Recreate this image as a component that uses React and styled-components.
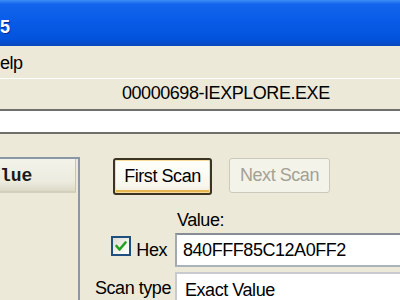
import styled, { createGlobalStyle } from "styled-components";

const GlobalStyle = createGlobalStyle`
  html, body {
    margin: 0;
    padding: 0;
    background: #ece9d8;
    overflow: hidden;
  }
  body {
    font-family: "Liberation Sans", Arial, sans-serif;
    font-size: 18px;
    letter-spacing: -0.45px;
    color: #000;
  }
`;

const App = () => {
  return (
    <Window>
      <GlobalStyle />
      <TitleBar>
        <TitleText>5</TitleText>
      </TitleBar>

      <MenuBar>
        <MenuItem>elp</MenuItem>
      </MenuBar>

      <ProcessBar>00000698-IEXPLORE.EXE</ProcessBar>
      <ProgressBar />

      <Main>
        <ListPanel>
          <ListHeader>lue</ListHeader>
        </ListPanel>

        <ScanPanel>
          <ButtonRow>
            <ScanButton $primary>First Scan</ScanButton>
            <ScanButton disabled>Next Scan</ScanButton>
          </ButtonRow>

          <Form>
            <span />
            <FieldLabel>Value:</FieldLabel>

            <HexLabel>
              <CheckBox>
                <svg width="14" height="14" viewBox="0 0 14 14">
                  <path
                    d="M2.5 7 L5.5 10.5 L11.5 3.5"
                    fill="none"
                    stroke="#21a121"
                    strokeWidth="2.6"
                    strokeLinecap="round"
                    strokeLinejoin="round"
                  />
                </svg>
              </CheckBox>
              Hex
            </HexLabel>
            <TextBox>840FFF85C12A0FF2</TextBox>

            <RowLabel>Scan type</RowLabel>
            <TextBox $light>Exact Value</TextBox>
          </Form>
        </ScanPanel>
      </Main>
    </Window>
  );
};

export default App;

const Window = styled.div`
  width: 400px;
  height: 300px;
  overflow: hidden;
  background: #ece9d8;
`;

const TitleBar = styled.div`
  height: 46px;
  box-sizing: border-box;
  padding-top: 17px;
  background: linear-gradient(
    180deg,
    #3d8ef6 0px,
    #1465ec 4px,
    #0a5de8 40%,
    #0252dc 85%,
    #0a48bd 100%
  );
`;

const TitleText = styled.span`
  display: block;
  line-height: 20px;
  font-weight: 700;
  font-size: 18px;
  color: #fff;
  text-shadow: 1px 1px 0 #0a2e8a;
`;

const MenuBar = styled.div`
  height: 32px;
  box-sizing: border-box;
  padding-top: 7px;
  background: #ece9d8;
`;

const MenuItem = styled.span`
  display: block;
  line-height: 20px;
`;

const ProcessBar = styled.div`
  height: 33px;
  box-sizing: border-box;
  padding: 4px 0 0 122px;
  line-height: 20px;
  border-top: 1px solid #ffffff;
  border-bottom: 2px solid #6f6f6c;
  background: #ece9d8;
`;

const ProgressBar = styled.div`
  height: 23px;
  box-sizing: border-box;
  background: #ffffff;
  border-bottom: 2px solid #6f6f6c;
`;

const Main = styled.div`
  display: flex;
  padding-top: 23px;
  height: 166px;
  box-sizing: border-box;
`;

const ListPanel = styled.div`
  width: 80px;
  flex: 0 0 80px;
  box-sizing: border-box;
  border-top: 2px solid #8a97a6;
  border-right: 2px solid #8a97a6;
`;

const ListHeader = styled.div`
  width: 76px;
  height: 34px;
  box-sizing: border-box;
  padding-top: 7px;
  line-height: 20px;
  letter-spacing: 0;
  font-family: "Liberation Mono", "Courier New", monospace;
  font-weight: 700;
  font-size: 18px;
  color: #1a1a1a;
  background: linear-gradient(180deg, #f4f3ea 0%, #ecebdf 70%, #dcd9c8 100%);
  border-bottom: 2px solid #d2cfbd;
  border-right: 1px solid #c8c5b4;
`;

const ScanPanel = styled.div`
  flex: 1;
  display: flex;
  flex-direction: column;
  padding-top: 1px;
`;

const ButtonRow = styled.div`
  display: flex;
  align-items: flex-start;
  gap: 17px;
  margin-left: 33px;
`;

const ScanButton = styled.button`
  box-sizing: border-box;
  width: ${(p) => (p.$primary ? "99px" : "101px")};
  height: ${(p) => (p.$primary ? "37px" : "35px")};
  padding: 0;
  font-family: "Liberation Sans", Arial, sans-serif;
  font-size: 18px;
  letter-spacing: -0.45px;
  border-radius: 3px;
  color: ${(p) => (p.$primary ? "#000" : "#a3a193")};
  border: ${(p) => (p.$primary ? "2px solid #3b3423" : "1px solid #cbc9bc")};
  background: ${(p) =>
    p.$primary
      ? "linear-gradient(180deg, #fffffb 0%, #f8f6ec 80%, #efebdb 100%)"
      : "#f4f3ea"};
  box-shadow: ${(p) =>
    p.$primary
      ? "inset 0 0 0 1px #f6dc98, inset 0 -3px 0 #e8b650"
      : "none"};
`;

const Form = styled.div`
  display: grid;
  grid-template-columns: 88px 1fr;
  column-gap: 7px;
  margin-top: 15px;
  grid-template-rows: 20px 34px 34px;
  row-gap: 3px;

  & > :nth-child(n + 5) {
    margin-top: 2px;
  }
`;

const FieldLabel = styled.span`
  line-height: 20px;
  padding-left: 2px;
`;

const RowLabel = styled.span`
  display: flex;
  align-items: center;
  justify-content: flex-end;
  margin-right: -3px;
  padding-top: 1px;
`;

const HexLabel = styled.label`
  display: flex;
  align-items: center;
  justify-content: flex-end;
  gap: 5px;
  margin-right: 1px;
`;

const CheckBox = styled.span`
  width: 20px;
  height: 20px;
  box-sizing: border-box;
  margin-bottom: 8px;
  display: flex;
  align-items: center;
  justify-content: center;
  border: 2px solid #1e4f7f;
  background: linear-gradient(135deg, #dcdcd4 0%, #f4f4ee 60%, #ffffff 100%);
`;

const TextBox = styled.div`
  box-sizing: border-box;
  height: 34px;
  padding: ${(p) => (p.$light ? "6px 0 0 8px" : "5px 0 0 6px")};
  line-height: 20px;
  background: #fff;
  border-top: 2px solid ${(p) => (p.$light ? "#c7cbd0" : "#878d95")};
  border-bottom: 2px solid #aab2bb;
  border-left: 2px solid ${(p) => (p.$light ? "#c7cbd0" : "#a3a9b1")};
  white-space: nowrap;
`;
